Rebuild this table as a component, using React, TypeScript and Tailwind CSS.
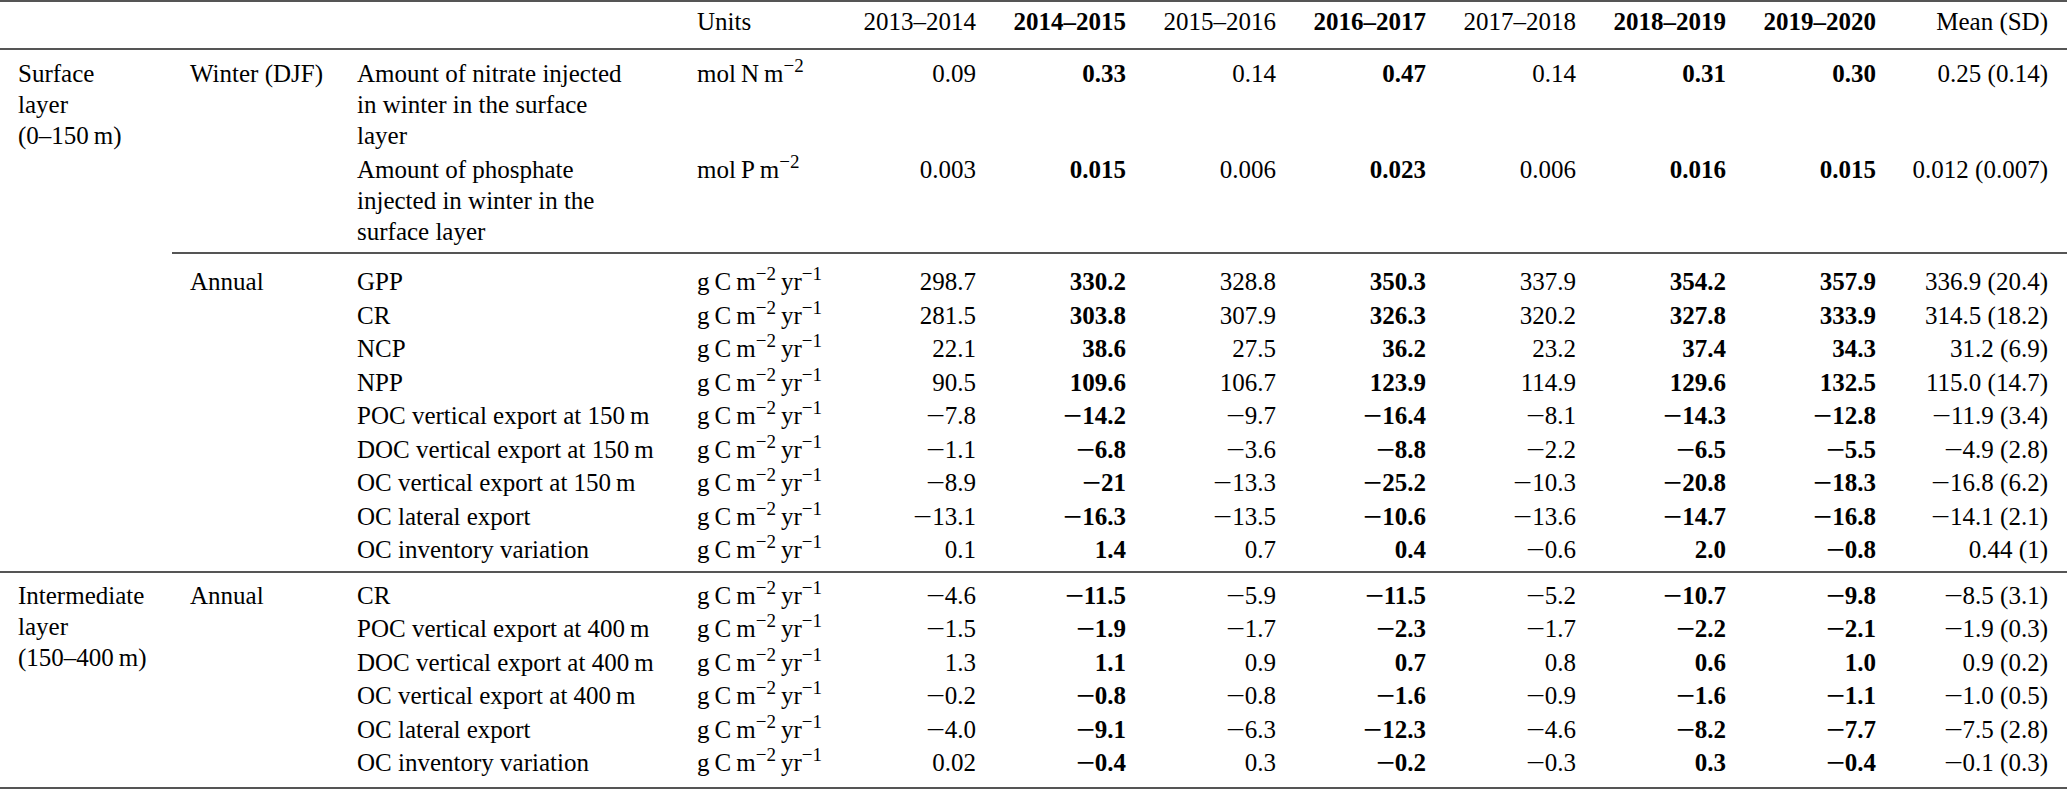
import React from "react";

const years = ["2013–2014", "2014–2015", "2015–2016", "2016–2017", "2017–2018", "2018–2019", "2019–2020"];
const boldCols = [false, true, false, true, false, true, true];

type Row = { name: string; vals: string[]; mean: string };

const gC = "gC";
const molN = "molN";
const molP = "molP";

const winterRows: (Row & { unit: string })[] = [
  {
    name: "Amount of nitrate injected in winter in the surface layer",
    unit: molN,
    vals: ["0.09", "0.33", "0.14", "0.47", "0.14", "0.31", "0.30"],
    mean: "0.25 (0.14)",
  },
  {
    name: "Amount of phosphate injected in winter in the surface layer",
    unit: molP,
    vals: ["0.003", "0.015", "0.006", "0.023", "0.006", "0.016", "0.015"],
    mean: "0.012 (0.007)",
  },
];

const surfaceAnnual: Row[] = [
  { name: "GPP", vals: ["298.7", "330.2", "328.8", "350.3", "337.9", "354.2", "357.9"], mean: "336.9 (20.4)" },
  { name: "CR", vals: ["281.5", "303.8", "307.9", "326.3", "320.2", "327.8", "333.9"], mean: "314.5 (18.2)" },
  { name: "NCP", vals: ["22.1", "38.6", "27.5", "36.2", "23.2", "37.4", "34.3"], mean: "31.2 (6.9)" },
  { name: "NPP", vals: ["90.5", "109.6", "106.7", "123.9", "114.9", "129.6", "132.5"], mean: "115.0 (14.7)" },
  { name: "POC vertical export at 150\u2009m", vals: ["−7.8", "−14.2", "−9.7", "−16.4", "−8.1", "−14.3", "−12.8"], mean: "−11.9 (3.4)" },
  { name: "DOC vertical export at 150\u2009m", vals: ["−1.1", "−6.8", "−3.6", "−8.8", "−2.2", "−6.5", "−5.5"], mean: "−4.9 (2.8)" },
  { name: "OC vertical export at 150\u2009m", vals: ["−8.9", "−21", "−13.3", "−25.2", "−10.3", "−20.8", "−18.3"], mean: "−16.8 (6.2)" },
  { name: "OC lateral export", vals: ["−13.1", "−16.3", "−13.5", "−10.6", "−13.6", "−14.7", "−16.8"], mean: "−14.1 (2.1)" },
  { name: "OC inventory variation", vals: ["0.1", "1.4", "0.7", "0.4", "−0.6", "2.0", "−0.8"], mean: "0.44 (1)" },
];

const interAnnual: Row[] = [
  { name: "CR", vals: ["−4.6", "−11.5", "−5.9", "−11.5", "−5.2", "−10.7", "−9.8"], mean: "−8.5 (3.1)" },
  { name: "POC vertical export at 400\u2009m", vals: ["−1.5", "−1.9", "−1.7", "−2.3", "−1.7", "−2.2", "−2.1"], mean: "−1.9 (0.3)" },
  { name: "DOC vertical export at 400\u2009m", vals: ["1.3", "1.1", "0.9", "0.7", "0.8", "0.6", "1.0"], mean: "0.9 (0.2)" },
  { name: "OC vertical export at 400\u2009m", vals: ["−0.2", "−0.8", "−0.8", "−1.6", "−0.9", "−1.6", "−1.1"], mean: "−1.0 (0.5)" },
  { name: "OC lateral export", vals: ["−4.0", "−9.1", "−6.3", "−12.3", "−4.6", "−8.2", "−7.7"], mean: "−7.5 (2.8)" },
  { name: "OC inventory variation", vals: ["0.02", "−0.4", "0.3", "−0.2", "−0.3", "0.3", "−0.4"], mean: "−0.1 (0.3)" },
];

function Sup({ children }: { children: React.ReactNode }) {
  return <sup className="text-[19px] -top-[10px]">{children}</sup>;
}

function Unit({ kind }: { kind: string }) {
  if (kind === molN || kind === molP) {
    return (
      <>
        mol{"\u2009"}
        {kind === molN ? "N" : "P"}
        {"\u2009"}m<Sup>−2</Sup>
      </>
    );
  }
  return (
    <>
      g{"\u2009"}C{"\u2009"}m<Sup>−2</Sup>
      {"\u2009"}yr<Sup>−1</Sup>
    </>
  );
}

// math minus in the source is wider than the text glyph
function Num({ v }: { v: string }) {
  if (v.startsWith("−")) {
    return (
      <>
        <span className="inline-block w-[19px] text-center scale-x-[1.35]">−</span>
        {v.slice(1)}
      </>
    );
  }
  return <>{v}</>;
}

function Values({ vals, mean }: { vals: string[]; mean: string }) {
  return (
    <>
      {vals.map((v, i) => (
        <div key={i} className={`w-[150px] shrink-0 pr-[18px] text-right ${boldCols[i] ? "font-bold" : ""}`}>
          <Num v={v} />
        </div>
      ))}
      <div className="w-[172px] shrink-0 pr-[18px] text-right whitespace-nowrap">
        <Num v={mean} />
      </div>
    </>
  );
}

function AnnualBlock({ rows, className }: { rows: Row[]; className: string }) {
  return (
    <div className={`flex leading-[33.5px] ${className}`}>
      <div className="w-[167px] shrink-0 pl-[18px]">Annual</div>
      <div className="flex-1">
        {rows.map((r) => (
          <div key={r.name} className="flex">
            <div className="w-[340px] shrink-0 pl-[18px] whitespace-nowrap">{r.name}</div>
            <div className="w-[165px] shrink-0 pl-[18px] whitespace-nowrap">
              <Unit kind={gC} />
            </div>
            <Values vals={r.vals} mean={r.mean} />
          </div>
        ))}
      </div>
    </div>
  );
}

function LayerName({ lines, className }: { lines: string[]; className: string }) {
  return (
    <div className={`w-[172px] shrink-0 pl-[18px] leading-[31px] ${className}`}>
      {lines.map((l) => (
        <span key={l} className="block whitespace-nowrap">
          {l}
        </span>
      ))}
    </div>
  );
}

export default function App() {
  return (
    <div
      className="min-h-screen w-full bg-white text-[25px] text-black"
      style={{ fontFamily: '"Liberation Serif", "Times New Roman", serif' }}
    >
      {/* header */}
      <div className="flex border-t-2 border-b-2 border-[#555] pt-[4px] pb-[11px] leading-[31px]">
        <div className="w-[172px] shrink-0" />
        <div className="w-[167px] shrink-0" />
        <div className="w-[340px] shrink-0" />
        <div className="w-[165px] shrink-0 pl-[18px]">Units</div>
        {years.map((y, i) => (
          <div key={y} className={`w-[150px] shrink-0 pr-[18px] text-right ${boldCols[i] ? "font-bold" : ""}`}>
            {y}
          </div>
        ))}
        <div className="w-[172px] shrink-0 pr-[18px] text-right">Mean (SD)</div>
      </div>

      {/* surface layer */}
      <div className="flex border-b-2 border-[#555]">
        <LayerName lines={["Surface", "layer", "(0–150\u2009m)"]} className="pt-[8px]" />
        <div className="flex-1">
          <div className="flex border-b-2 border-[#555] pt-[8px] pb-[5px] leading-[31px]">
            <div className="w-[167px] shrink-0 pl-[18px] whitespace-nowrap">Winter (DJF)</div>
            <div className="flex-1 flex flex-col gap-[3px]">
              {winterRows.map((r) => (
                <div key={r.name} className="flex">
                  <div className="w-[340px] shrink-0 pl-[18px]">
                    <div className="w-[280px]">{r.name}</div>
                  </div>
                  <div className="w-[165px] shrink-0 pl-[18px] whitespace-nowrap">
                    <Unit kind={r.unit} />
                  </div>
                  <Values vals={r.vals} mean={r.mean} />
                </div>
              ))}
            </div>
          </div>
          <AnnualBlock rows={surfaceAnnual} className="pt-[11px] pb-[4px]" />
        </div>
      </div>

      {/* intermediate layer */}
      <div className="flex border-b-2 border-[#555]">
        <LayerName lines={["Intermediate", "layer", "(150–400\u2009m)"]} className="pt-[7px]" />
        <div className="flex-1">
          <AnnualBlock rows={interAnnual} className="pt-[6px] pb-[7px]" />
        </div>
      </div>
    </div>
  );
}
